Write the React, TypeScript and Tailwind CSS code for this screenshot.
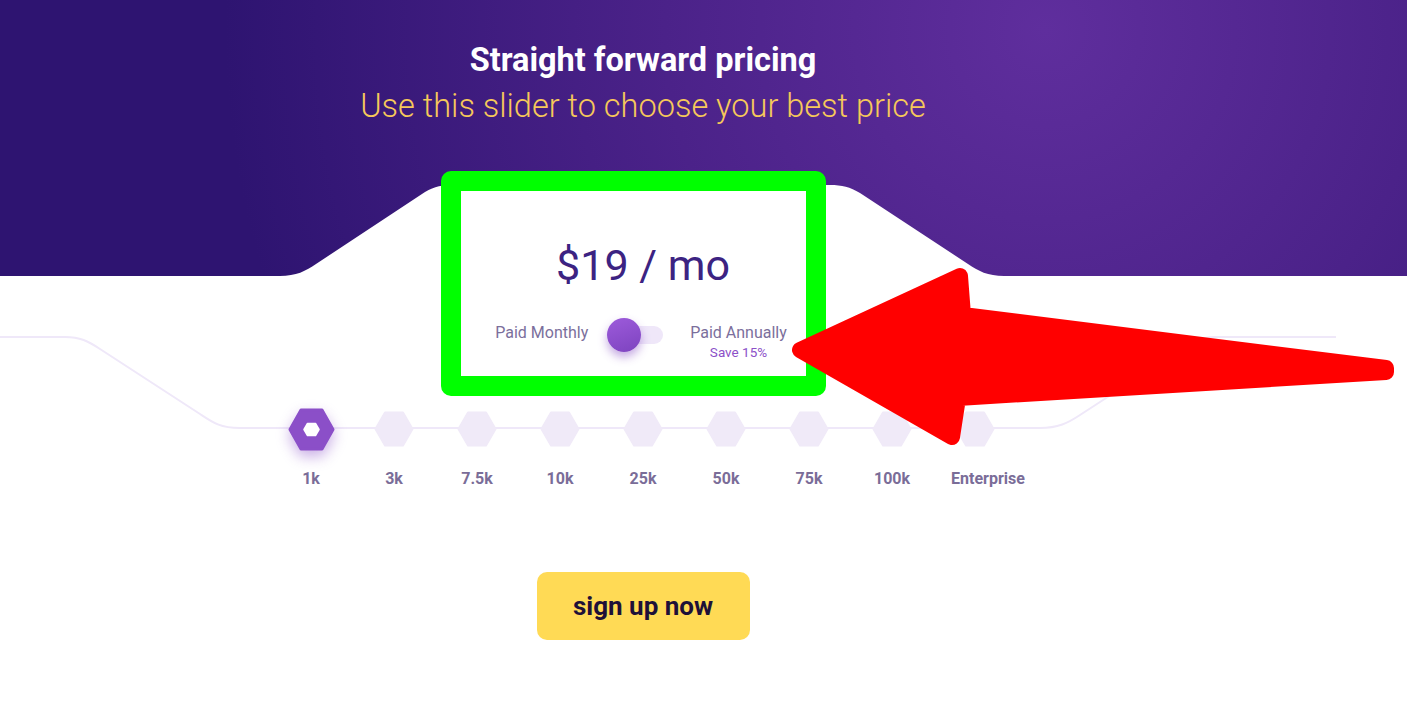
import { useState } from "react";

const tiers = ["1k", "3k", "7.5k", "10k", "25k", "50k", "75k", "100k", "Enterprise"];

function Hex({ active }: { active: boolean }) {
  if (active) {
    return (
      <svg width="47" height="43" viewBox="0 0 47 43" className="drop-shadow-[0_6px_7px_rgba(138,79,199,0.45)]">
        <polygon points="13,2 34,2 45,21.5 34,41 13,41 2,21.5" fill="#8b4fc8" stroke="#8b4fc8" strokeWidth="3" strokeLinejoin="round" />
        <polygon points="19.5,15.5 27.5,15.5 31,21.5 27.5,27.5 19.5,27.5 16,21.5" fill="#ffffff" stroke="#ffffff" strokeWidth="1.5" strokeLinejoin="round" />
      </svg>
    );
  }
  return (
    <svg width="40" height="36" viewBox="0 0 40 36">
      <polygon points="11,1.5 29,1.5 38.5,18 29,34.5 11,34.5 1.5,18" fill="#f0eaf8" stroke="#f0eaf8" strokeWidth="2" strokeLinejoin="round" />
    </svg>
  );
}

export default function App() {
  const [annual, setAnnual] = useState(false);
  const [tier, setTier] = useState(0);

  return (
    <div className="relative w-full h-[703px] overflow-hidden bg-white font-[Roboto,sans-serif]">
      {/* decorative track line behind the tier selector */}
      <svg className="absolute left-0 top-0 pointer-events-none" width="1407" height="703" viewBox="0 0 1407 703">
        <path
          d="M0,337 H65 C80,337 88,341 100,349 L200,414 C212,422 220,428 240,428 H1040 C1058,428 1068,423 1080,415 L1180,350 C1192,342 1200,337 1215,337 H1336"
          fill="none"
          stroke="#efe8f9"
          strokeWidth="2"
        />
      </svg>

      {/* Header */}
      <header className="relative h-[276px] bg-[radial-gradient(circle_at_1045px_30px,#5f2e9d_0px,#4b2289_380px,#2e1471_820px)]">
        <div className="w-[1286px] pt-[42px] text-center">
          <h1 className="text-[32.5px] leading-[37px] font-bold text-white">Straight forward pricing</h1>
          <p className="mt-[9px] text-[32.5px] leading-[37px] font-light text-[#f6c85a]">
            Use this slider to choose your best price
          </p>
        </div>
        {/* notch cut into the bottom of the header */}
        <svg
          className="absolute left-0 bottom-0 w-full h-[91px]"
          viewBox="0 185 1407 91"
          preserveAspectRatio="none"
        >
          <path
            d="M280,276 C296,276 306,271 316,264 L425,192 C435,186 442,185 455,185 L830,185 C842,185 850,187 860,193 L968,264 C978,271 988,276 1004,276 Z"
            fill="#ffffff"
          />
        </svg>
      </header>

      <main className="relative w-[1286px]">
        {/* Price card */}
        <div className="relative z-10 -mt-[105px] ml-[441px] w-[385px] h-[225px] rounded-[10px] border-[20px] border-[#00ff00] bg-white">
          <div className="pl-[19px] flex flex-col items-center">
            <div className="mt-[48px] text-[43px] leading-[52px] text-[#3c2382]">$19 / mo</div>
            <div className="mt-[32px] mr-[4px] flex items-start text-[16px] leading-[20px] text-[#7b6f9c]">
              <span className="mr-[19px]">Paid Monthly</span>
              <button
                onClick={() => setAnnual(!annual)}
                className="relative -mt-[5px] w-[56px] h-[34px] flex items-center"
              >
                <span className="absolute left-[4px] right-0 h-[18px] rounded-full bg-[#efe7f9]" />
                <span
                  className={`relative h-[34px] w-[34px] rounded-full bg-[linear-gradient(160deg,#9d5bdb,#7d43bf)] shadow-[0_5px_10px_rgba(126,67,192,0.45)] ${
                    annual ? "ml-[22px]" : "ml-0"
                  }`}
                />
              </button>
              <div className="ml-[27px] flex flex-col items-center">
                <span>Paid Annually</span>
                <span className="mt-[1px] text-[13.5px] leading-[16px] text-[#8c50c8]">Save 15%</span>
              </div>
            </div>
          </div>
        </div>

        {/* Tier selector */}
        <div className="relative mt-[11px] flex justify-center">
          {tiers.map((t, i) => (
            <button key={t} onClick={() => setTier(i)} className="w-[83px] flex flex-col items-center">
              <div className="h-[44px] flex items-center justify-center">
                <Hex active={tier === i} />
              </div>
              <span
                className={`mt-[18px] text-[16px] leading-[20px] font-bold text-[#7a6d98] ${
                  i === tiers.length - 1 ? "ml-[26px]" : ""
                }`}
              >
                {t}
              </span>
            </button>
          ))}
        </div>

        <div className="mt-[83px] flex justify-center">
          <button className="w-[213px] h-[68px] rounded-[10px] bg-[#ffda55] text-[26px] font-bold text-[#1e1038]">
            sign up now
          </button>
        </div>
      </main>

      {/* annotation arrow */}
      <svg className="absolute left-0 top-0 z-20 pointer-events-none" width="1407" height="703" viewBox="0 0 1407 703">
        <polygon
          points="800,350 960,276 963,315 1386,368 1386,372 958,398 952,437"
          fill="#ff0000"
          stroke="#ff0000"
          strokeWidth="16"
          strokeLinejoin="round"
        />
      </svg>
    </div>
  );
}
